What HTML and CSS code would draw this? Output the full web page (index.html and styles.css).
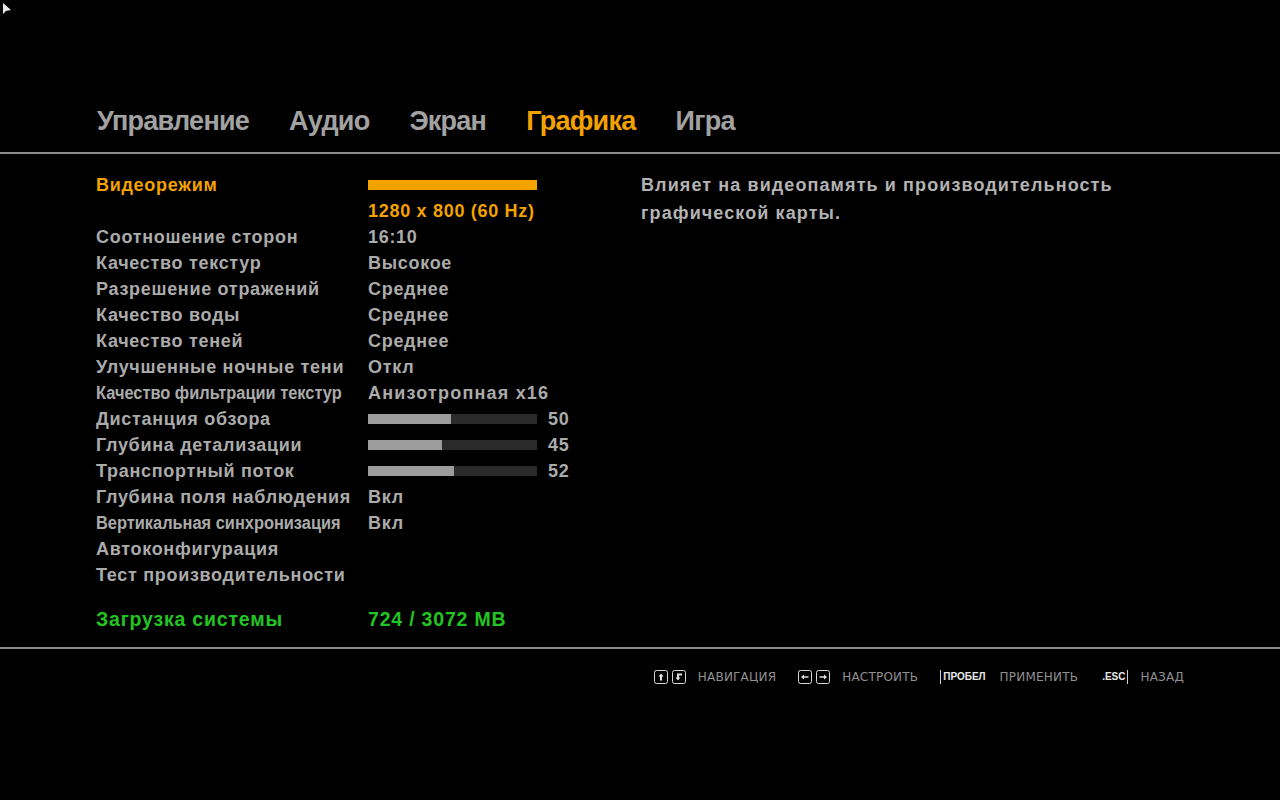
FILE: index.html
```html
<!DOCTYPE html>
<html lang="ru">
<head>
<meta charset="utf-8">
<title>Графика</title>
<link rel="stylesheet" href="styles.css">
</head>
<body>
<svg class="cursor" width="10" height="14" viewBox="0 0 10 14"><polygon points="1,1 1,12 4,9 9,8" fill="#e8e8e8"/></svg>
<div class="screen">
  <nav class="tabs">
    <span class="tab">Управление</span>
    <span class="tab">Аудио</span>
    <span class="tab">Экран</span>
    <span class="tab active">Графика</span>
    <span class="tab">Игра</span>
  </nav>
  <div class="rule"></div>
  <main class="content">
    <section class="settings">
      <div class="row selected"><span class="label">Видеорежим</span><span class="value"><span class="selbar"></span></span></div>
      <div class="row selected"><span class="label"></span><span class="value">1280 x 800 (60 Hz)</span></div>
      <div class="row"><span class="label">Соотношение сторон</span><span class="value">16:10</span></div>
      <div class="row"><span class="label">Качество текстур</span><span class="value">Высокое</span></div>
      <div class="row"><span class="label">Разрешение отражений</span><span class="value">Среднее</span></div>
      <div class="row"><span class="label">Качество воды</span><span class="value">Среднее</span></div>
      <div class="row"><span class="label">Качество теней</span><span class="value">Среднее</span></div>
      <div class="row"><span class="label">Улучшенные ночные тени</span><span class="value">Откл</span></div>
      <div class="row"><span class="label"><span class="narrow">Качество фильтрации текстур</span></span><span class="value wide">Анизотропная x16</span></div>
      <div class="row"><span class="label">Дистанция обзора</span><span class="value"><span class="slider"><span class="fill" style="width:49%"></span></span><span class="num">50</span></span></div>
      <div class="row"><span class="label">Глубина детализации</span><span class="value"><span class="slider"><span class="fill" style="width:44%"></span></span><span class="num">45</span></span></div>
      <div class="row"><span class="label">Транспортный поток</span><span class="value"><span class="slider"><span class="fill" style="width:51%"></span></span><span class="num">52</span></span></div>
      <div class="row"><span class="label">Глубина поля наблюдения</span><span class="value">Вкл</span></div>
      <div class="row"><span class="label"><span class="narrow">Вертикальная синхронизация</span></span><span class="value">Вкл</span></div>
      <div class="row"><span class="label">Автоконфигурация</span><span class="value"></span></div>
      <div class="row"><span class="label">Тест производительности</span><span class="value"></span></div>
      <div class="row usage"><span class="label">Загрузка системы</span><span class="value">724 / 3072 MB</span></div>
    </section>
    <aside class="desc">Влияет на видеопамять и производительность<br>графической карты.</aside>
  </main>
  <div class="rule"></div>
  <footer class="hints">
    <div class="hint">
      <span class="keys">
        <svg class="key" width="14" height="14" viewBox="0 0 14 14"><rect x="0.5" y="0.5" width="13" height="13" rx="2" fill="none" stroke="#d8d8d8"/><path d="M7 3.5 L4.5 6.5 H6 V10.5 H8 V6.5 H9.5 Z" fill="#e0e0e0"/></svg>
        <svg class="key" width="14" height="14" viewBox="0 0 14 14"><rect x="0.5" y="0.5" width="13" height="13" rx="2" fill="none" stroke="#d8d8d8"/><path d="M5 3.5 V7.5 H3.5 L6 10.5 L8.5 7.5 H7 V5.5 H10 V3.5 Z" fill="#e0e0e0"/></svg>
      </span>
      <span class="htext">НАВИГАЦИЯ</span>
    </div>
    <div class="hint">
      <span class="keys">
        <svg class="key" width="14" height="14" viewBox="0 0 14 14"><rect x="0.5" y="0.5" width="13" height="13" rx="2" fill="none" stroke="#d8d8d8"/><path d="M3 7 L6 4.5 V6.2 H10.5 V7.8 H6 V9.5 Z" fill="#e0e0e0"/></svg>
        <svg class="key" width="14" height="14" viewBox="0 0 14 14"><rect x="0.5" y="0.5" width="13" height="13" rx="2" fill="none" stroke="#d8d8d8"/><path d="M11 7 L8 4.5 V6.2 H3.5 V7.8 H8 V9.5 Z" fill="#e0e0e0"/></svg>
      </span>
      <span class="htext">НАСТРОИТЬ</span>
    </div>
    <div class="hint">
      <span class="keycap left">ПРОБЕЛ</span>
      <span class="htext">ПРИМЕНИТЬ</span>
    </div>
    <div class="hint">
      <span class="keycap right">.ESC</span>
      <span class="htext">НАЗАД</span>
    </div>
  </footer>
</div>
</body>
</html>
```

FILE: styles.css
```css
html, body {
  margin: 0;
  padding: 0;
  background: #000;
  width: 1280px;
  height: 800px;
  overflow: hidden;
}

body {
  font-family: "Liberation Sans", Arial, sans-serif;
  font-weight: bold;
  color: #ababab;
  position: relative;
}

.cursor {
  position: absolute;
  left: 2px;
  top: 2px;
}

.screen {
  display: flex;
  flex-direction: column;
  padding-top: 103px;
}

.tabs {
  display: flex;
  gap: 40px;
  padding-left: 97px;
  height: 36px;
  align-items: center;
  margin-bottom: 13px;
}

.tab {
  font-size: 27px;
  color: #a2a2a2;
  letter-spacing: -0.75px;
  line-height: 36px;
}

.tab.active {
  color: #f3a200;
}

.rule {
  height: 2px;
  background: #8c8c8c;
}

.content {
  display: flex;
  padding: 18px 0 15px 96px;
}

.settings {
  width: 545px;
  display: flex;
  flex-direction: column;
}

.row {
  display: flex;
  align-items: center;
  height: 26px;
  font-size: 18px;
  letter-spacing: 0.7px;
}

.label {
  width: 272px;
  white-space: nowrap;
  color: #ababab;
}

.value {
  display: flex;
  align-items: center;
  color: #ababab;
  white-space: nowrap;
}

.value.wide {
  letter-spacing: 1.2px;
}

.narrow {
  display: inline-block;
  transform: scaleX(0.91);
  transform-origin: left center;
  letter-spacing: 0;
}

.row.selected .label,
.row.selected .value {
  color: #f3a200;
}

.selbar {
  display: block;
  width: 169px;
  height: 10px;
  background: #f3a200;
}

.slider {
  display: block;
  width: 169px;
  height: 10px;
  background: #2a2a2a;
}

.fill {
  display: block;
  height: 100%;
  background: #9c9c9c;
}

.num {
  margin-left: 11px;
}

.row.usage {
  margin-top: 18px;
  font-size: 19.5px;
  letter-spacing: 0.8px;
}

.row.usage .label,
.row.usage .value {
  color: #22c422;
}

.desc {
  font-size: 18px;
  letter-spacing: 1.1px;
  line-height: 28px;
  color: #b3b3b3;
  margin-top: -1px;
}

.hints {
  display: flex;
  justify-content: flex-end;
  align-items: center;
  gap: 22px;
  padding: 21px 96px 0 0;
  height: 14px;
}

.hint {
  display: flex;
  align-items: center;
  gap: 12px;
}

.keys {
  display: flex;
  gap: 4px;
}

.key {
  display: block;
}

.htext {
  font-family: "DejaVu Sans", "Liberation Sans", sans-serif;
  font-weight: normal;
  font-size: 12px;
  color: #909090;
  letter-spacing: 0.2px;
}

.keycap {
  font-size: 10px;
  color: #e8e8e8;
  letter-spacing: 0;
  height: 14px;
  line-height: 14px;
  padding: 0 2px;
}

.keycap.left {
  border-left: 1px solid #d0d0d0;
}

.keycap.right {
  border-right: 1px solid #d0d0d0;
}
```
